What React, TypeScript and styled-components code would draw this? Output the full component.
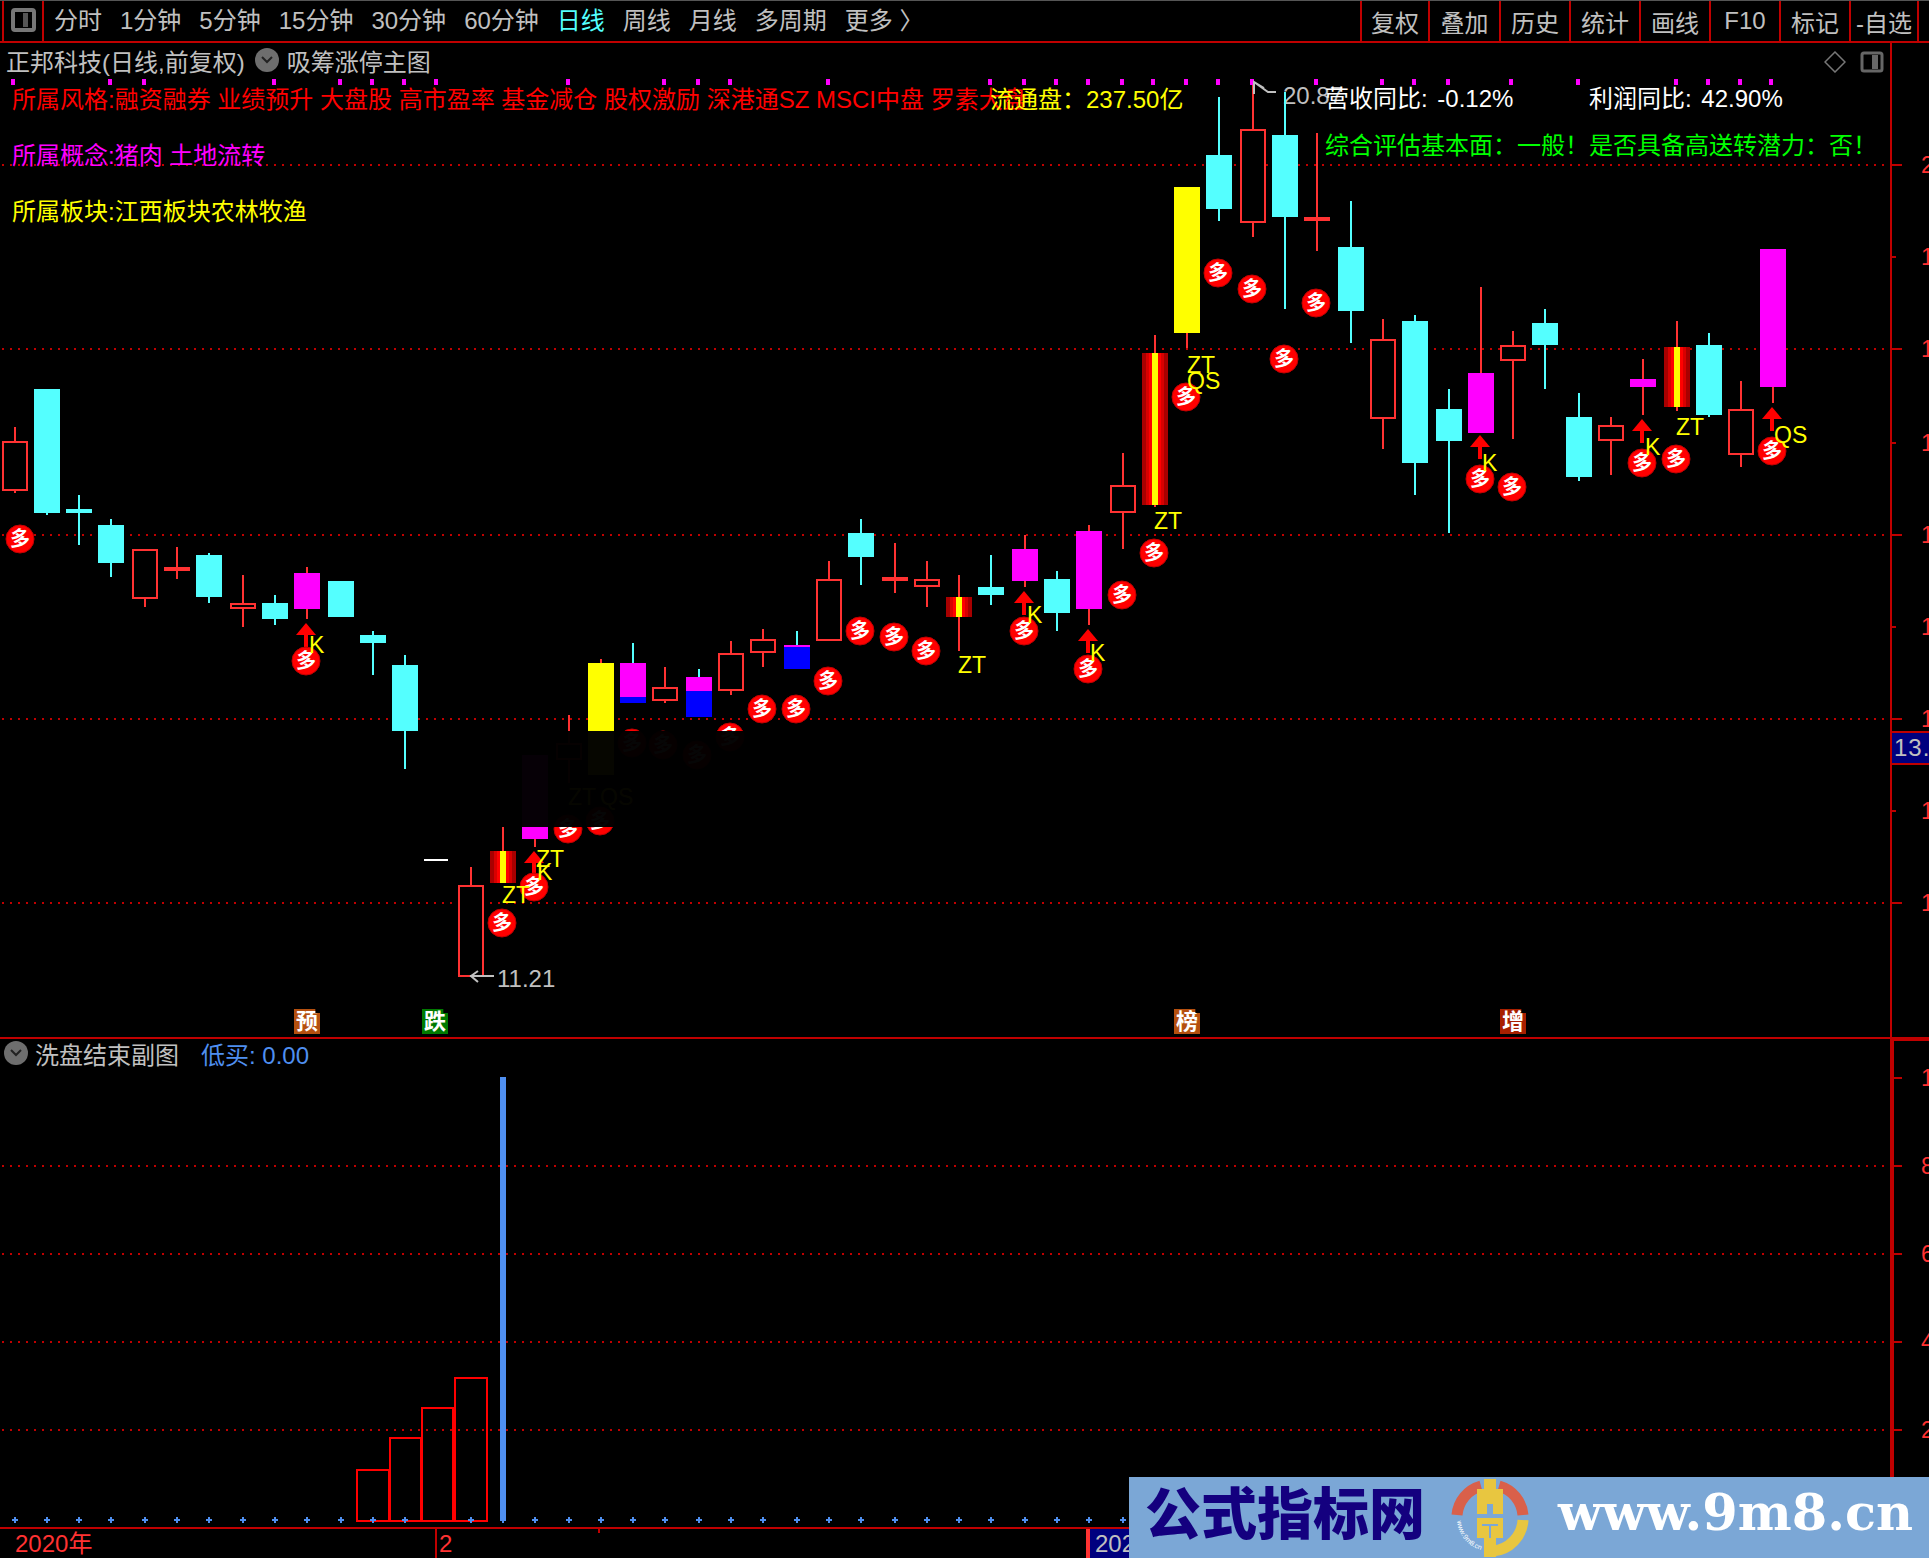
import React from "react";
import styled, { createGlobalStyle } from "styled-components";

const FONT = `"Liberation Sans", "Noto Sans CJK SC", sans-serif`;
const DARK_RED = "#c00000";
const AXIS_RED = "#ff3232";
const GRAY = "#c0c0c0";
const CYAN = "#54ffff";
const BLUE_LINE = "#4f8ff0";

const Global = createGlobalStyle`
  html, body { margin: 0; padding: 0; background: #000; }
  body { font-family: ${FONT}; }
`;

const Page = styled.div`
  position: relative;
  width: 1929px;
  height: 1558px;
  overflow: hidden;
  background: #000;
  display: flex;
  flex-direction: column;
  font-family: ${FONT};
  color: ${GRAY};
`;

const Toolbar = styled.header`
  height: 40px;
  flex: none;
  display: flex;
  align-items: center;
  border-top: 1px solid #555;
  border-bottom: 2px solid ${DARK_RED};
  padding-left: 2px;
`;

const LayoutCell = styled.div`
  width: 42px;
  height: 40px;
  flex: none;
  display: flex;
  align-items: center;
  justify-content: center;
  border-left: 2px solid ${DARK_RED};
  border-right: 2px solid ${DARK_RED};
  padding-bottom: 2px;
  box-sizing: border-box;
`;

const PeriodRow = styled.nav`
  display: flex;
  gap: 18px;
  margin-left: 10px;
  font-size: 24px;
  line-height: 42px;
  white-space: nowrap;
`;

const PeriodItem = styled.span<{ $active?: boolean }>`
  color: ${(p) => (p.$active ? CYAN : GRAY)};
`;

const ToolRow = styled.div`
  margin-left: auto;
  margin-right: 10px;
  display: flex;
  height: 40px;
`;

const ToolCell = styled.div<{ $w: number }>`
  width: ${(p) => p.$w}px;
  box-sizing: border-box;
  display: flex;
  align-items: center;
  justify-content: center;
  border-left: 2px solid ${DARK_RED};
  font-size: 24px;
  white-space: nowrap;
  &:last-child { border-right: 2px solid ${DARK_RED}; }
`;

const ChartPanel = styled.section<{ $h: number }>`
  position: relative;
  flex: none;
  height: ${(p) => p.$h}px;
  border-bottom: 2px solid ${DARK_RED};
`;

const Canvas = styled.svg`
  position: absolute;
  inset: 0;
  display: block;
`;

const PanelHeader = styled.div`
  position: relative;
  display: flex;
  align-items: center;
  height: 26px;
  font-size: 24px;
  white-space: nowrap;
`;

const MainHeader = styled(PanelHeader)`
  padding: 4px 0 0 6px;
`;

const SubHeader = styled(PanelHeader)`
  padding: 1px 0 0 4px;
`;

const Chevron = styled.span<{ $m: string }>`
  width: 24px;
  height: 24px;
  margin: ${(p) => p.$m};
  flex: none;
  border-radius: 50%;
  background: #6e6e6e;
  display: flex;
  align-items: center;
  justify-content: center;
`;

const SubValue = styled.span`
  color: ${BLUE_LINE};
  margin-left: 22px;
`;

const Corner = styled.div`
  position: absolute;
  top: 8px;
  left: 1824px;
  display: flex;
  gap: 14px;
`;

const Legend = styled.div`
  position: absolute;
  left: 12px;
  top: 45px;
  display: flex;
  flex-direction: column;
  gap: 32px;
  font-size: 24px;
  line-height: 24px;
  white-space: pre;
`;

const Line = styled.div<{ $c: string }>`
  color: ${(p) => p.$c};
`;

const Overprint = styled.div<{ $x: number; $y: number; $c: string }>`
  position: absolute;
  left: ${(p) => p.$x}px;
  top: ${(p) => p.$y}px;
  color: ${(p) => p.$c};
  font-size: 24px;
  line-height: 24px;
  white-space: pre;
  word-spacing: 3px;
`;

const Dimmer = styled.div`
  position: absolute;
  left: 420px;
  top: 688px;
  width: 760px;
  height: 96px;
  background: rgba(0, 0, 0, 0.975);
`;

const PriceTag = styled.div`
  position: absolute;
  left: 1892px;
  top: 688px;
  width: 37px;
  height: 34px;
  box-sizing: border-box;
  background: #00007f;
  border-top: 2px solid ${DARK_RED};
  border-bottom: 2px solid ${DARK_RED};
  padding-left: 2px;
  font-size: 24px;
  letter-spacing: 1px;
  line-height: 30px;
  color: ${GRAY};
  white-space: nowrap;
  overflow: hidden;
`;

const Label = styled.text<{ $c?: string }>`
  font-family: ${FONT};
  font-size: 23px;
  fill: ${(p) => p.$c ?? "#ffff00"};
`;

const PriceNote = styled(Label)`
  font-size: 24px;
`;

const BadgeGlyph = styled.text`
  font-family: "Noto Sans CJK SC", sans-serif;
  font-size: 20px;
  font-weight: 700;
  fill: #fff;
  text-anchor: middle;
`;

const Signal = styled.div<{ $x: number; $bg: string }>`
  position: absolute;
  left: ${(p) => p.$x}px;
  top: 966px;
  width: 26px;
  height: 25px;
  background: ${(p) => p.$bg};
  clip-path: polygon(0 0, 82% 0, 82% 16%, 100% 16%, 100% 100%, 0 100%);
  color: #fff;
  font-size: 22px;
  font-weight: 700;
  line-height: 25px;
  text-align: center;
`;

const DateBar = styled.footer`
  flex: 1;
  display: flex;
  font-size: 24px;
  color: ${AXIS_RED};
  line-height: 29px;
`;

const YearCell = styled.div`
  width: 435px;
  box-sizing: border-box;
  padding-left: 15px;
`;

const MonthCell = styled.div`
  position: relative;
  width: 651px;
  box-sizing: border-box;
  border-left: 2px solid ${DARK_RED};
  padding-left: 2px;
  &::after {
    content: "";
    position: absolute;
    left: 161px;
    top: 0;
    width: 2px;
    height: 4px;
    background: ${DARK_RED};
  }
`;

const CursorTag = styled.div`
  width: 200px;
  box-sizing: border-box;
  padding-left: 5px;
  background: #00007f;
  border-left: 4px solid ${AXIS_RED};
  color: ${GRAY};
  white-space: nowrap;
`;

const Watermark = styled.aside`
  position: absolute;
  left: 1129px;
  top: 1477px;
  right: 0;
  bottom: 0;
  background: #7ba7d6;
  display: flex;
  align-items: center;
  padding-left: 16px;
`;

const BrandCn = styled.div`
  width: 306px;
  font-family: "Noto Sans CJK SC", sans-serif;
  font-size: 56px;
  line-height: 80px;
  font-weight: 900;
  color: #14007f;
  white-space: nowrap;
  margin-top: -16px;
`;

const BrandUrl = styled.div`
  margin-left: 29px;
  font-family: "DejaVu Serif", serif;
  font-weight: 700;
  font-size: 51px;
  line-height: 60px;
  color: #fff;
  white-space: nowrap;
  margin-top: -12px;
`;

const LogoText = styled.text`
  font-family: "Liberation Sans", sans-serif;
  font-size: 7px;
  fill: #fff;
`;

type Kind = "hollow" | "solid" | "cyan" | "magenta" | "yellow" | "limit" | "blue";
type Candle = [number, number, number, number, number, Kind, number?];

const CANDLES: Candle[] = [
  [15, 427, 493, 441, 491, "hollow"],
  [47, 389, 515, 389, 513, "cyan"],
  [79, 495, 545, 509, 513, "cyan"],
  [111, 519, 577, 525, 563, "cyan"],
  [145, 549, 607, 549, 599, "hollow"],
  [177, 547, 579, 567, 571, "solid"],
  [209, 553, 603, 555, 597, "cyan"],
  [243, 575, 627, 603, 609, "hollow"],
  [275, 595, 625, 603, 619, "cyan"],
  [307, 567, 619, 573, 609, "magenta"],
  [341, 581, 617, 581, 617, "cyan"],
  [373, 631, 675, 635, 643, "cyan"],
  [405, 655, 769, 665, 731, "cyan"],
  [471, 867, 977, 885, 977, "hollow"],
  [503, 827, 883, 851, 883, "limit"],
  [535, 755, 847, 755, 839, "magenta"],
  [569, 715, 783, 743, 760, "hollow"],
  [601, 659, 775, 663, 775, "yellow"],
  [633, 643, 703, 663, 703, "blue", 697],
  [665, 667, 703, 687, 701, "hollow"],
  [699, 669, 717, 677, 717, "blue", 691],
  [731, 641, 695, 653, 691, "hollow"],
  [763, 629, 667, 639, 653, "hollow"],
  [797, 631, 669, 645, 669, "blue", 647],
  [829, 561, 641, 579, 641, "hollow"],
  [861, 519, 585, 533, 557, "cyan"],
  [895, 543, 593, 577, 581, "solid"],
  [927, 561, 607, 579, 587, "hollow"],
  [959, 575, 651, 597, 617, "limit"],
  [991, 555, 605, 587, 595, "cyan"],
  [1025, 535, 587, 549, 581, "magenta"],
  [1057, 571, 631, 579, 613, "cyan"],
  [1089, 525, 625, 531, 609, "magenta"],
  [1123, 453, 549, 485, 513, "hollow"],
  [1155, 335, 507, 353, 505, "limit"],
  [1187, 187, 348, 187, 333, "yellow"],
  [1219, 97, 221, 155, 209, "cyan"],
  [1253, 85, 237, 129, 223, "hollow"],
  [1285, 92, 309, 135, 217, "cyan"],
  [1317, 133, 251, 217, 221, "solid"],
  [1351, 201, 343, 247, 311, "cyan"],
  [1383, 319, 449, 339, 419, "hollow"],
  [1415, 315, 495, 321, 463, "cyan"],
  [1449, 389, 533, 409, 441, "cyan"],
  [1481, 287, 373, 373, 433, "magenta"],
  [1513, 331, 439, 345, 361, "hollow"],
  [1545, 309, 389, 323, 345, "cyan"],
  [1579, 393, 481, 417, 477, "cyan"],
  [1611, 417, 475, 425, 441, "hollow"],
  [1643, 359, 415, 379, 387, "magenta"],
  [1677, 321, 411, 347, 407, "limit"],
  [1709, 333, 417, 345, 415, "cyan"],
  [1741, 381, 467, 409, 455, "hollow"],
  [1773, 249, 403, 249, 387, "magenta"],
];

const BADGES: [number, number][] = [
  [20, 539], [306, 661], [502, 923], [534, 887], [568, 829], [600, 821],
  [730, 737], [632, 743], [663, 745], [697, 755], [762, 709], [796, 709],
  [828, 681], [860, 631], [894, 637], [926, 651], [1024, 631], [1088, 669],
  [1122, 595], [1154, 553], [1186, 397], [1218, 273], [1252, 289], [1316, 303],
  [1284, 359], [1480, 479], [1512, 487], [1642, 463], [1676, 459], [1772, 451],
];

const ARROWS: [number, number][] = [
  [306, 623], [534, 851], [1024, 591], [1088, 629], [1480, 435], [1642, 419], [1772, 407],
];

const TAGS: [string, number, number][] = [
  ["K", 309, 653], ["K", 537, 880], ["K", 1027, 623], ["K", 1090, 661],
  ["K", 1482, 471], ["K", 1645, 455],
  ["ZT", 536, 867], ["ZT", 502, 903], ["ZT", 958, 673], ["ZT", 1154, 529],
  ["ZT", 1187, 373], ["ZT", 1676, 435], ["ZT", 568, 805],
  ["QS", 1187, 389], ["QS", 1774, 443], ["QS", 600, 805],
];

const PINK_MARKS = [
  13, 110, 144, 274, 340, 372, 404, 436, 568, 664, 698, 730, 828, 990, 1024, 1056,
  1088, 1122, 1153, 1186, 1218, 1252, 1316, 1382, 1414, 1448, 1511, 1578, 1676,
  1708, 1740, 1771,
];

const MAIN_MAJOR = [164, 348, 534, 718, 902];
const MAIN_MINOR = [256, 442, 626, 810];
const SUB_GRID = [1166, 1254, 1342, 1430];
const SUB_LABELS: [string, number][] = [["1", 1078], ["8", 1166], ["6", 1254], ["4", 1342], ["2", 1430]];
const VOL_BARS: [number, number, number][] = [
  [357, 32, 1470], [390, 31, 1438], [422, 31, 1408], [455, 32, 1378],
];

const CandleMark = ({ c }: { c: Candle }) => {
  const [x, hi, lo, top, bot, kind, split] = c;
  const left = x - 13;
  const h = bot - top;
  const wick = kind === "cyan" || kind === "blue" ? CYAN : AXIS_RED;
  return (
    <g shapeRendering="crispEdges">
      <rect x={x - 1} y={hi} width={2} height={lo - hi} fill={wick} />
      {kind === "hollow" && (
        <rect x={left + 1} y={top + 1} width={24} height={h - 2} fill="#000" stroke={AXIS_RED} strokeWidth={2} />
      )}
      {kind === "solid" && <rect x={left} y={top} width={26} height={h} fill={AXIS_RED} />}
      {kind === "cyan" && <rect x={left} y={top} width={26} height={h} fill={CYAN} />}
      {kind === "magenta" && <rect x={left} y={top} width={26} height={h} fill="#ff00ff" />}
      {kind === "yellow" && <rect x={left} y={top} width={26} height={h} fill="#ffff00" />}
      {kind === "blue" && (
        <>
          <rect x={left} y={top} width={26} height={h} fill="#0000ff" />
          <rect x={left} y={top} width={26} height={(split ?? top) - top} fill="#ff00ff" />
        </>
      )}
      {kind === "limit" && (
        <>
          <rect x={left} y={top} width={26} height={h} fill="#a80000" />
          <rect x={left + 4} y={top} width={18} height={h} fill="#d80000" />
          <rect x={left + 7} y={top} width={12} height={h} fill="#ff0000" />
          <rect x={left + 10} y={top} width={6} height={h} fill="#ffff00" />
        </>
      )}
    </g>
  );
};

const Badge = ({ x, y }: { x: number; y: number }) => (
  <g>
    <circle cx={x} cy={y} r={14} fill="#ff0000" stroke="#c00000" strokeWidth={1} />
    <BadgeGlyph x={x} y={y + 7}>多</BadgeGlyph>
  </g>
);

const UpArrow = ({ x, y }: { x: number; y: number }) => (
  <g fill="#ff0000" shapeRendering="crispEdges">
    <polygon points={`${x},${y} ${x + 10},${y + 12} ${x - 10},${y + 12}`} shapeRendering="auto" />
    <rect x={x - 2} y={y + 12} width={4} height={12} />
  </g>
);

const ChevronIcon = () => (
  <svg width="12" height="8" viewBox="0 0 12 8" fill="none" stroke="#222" strokeWidth="2">
    <path d="M1 1 L6 6 L11 1" />
  </svg>
);

const Logo = () => (
  <svg width="78" height="78" viewBox="-39 -39 78 78" style={{ flex: "none" }}>
    <defs>
      <path id="logo-arc" d="M-33 3 A33 33 0 0 0 -3 33" />
    </defs>
    <path d="M-33 -3 A33 33 0 0 1 -9 -32" fill="none" stroke="#d9604a" strokeWidth="11" />
    <path d="M9 -32 A33 33 0 0 1 33 -3" fill="none" stroke="#d9604a" strokeWidth="11" />
    <path d="M33 2 A33 33 0 0 1 3 33" fill="none" stroke="#e8c640" strokeWidth="11" />
    <path
      d="M-6 -39 H6 V-29 H13 V-4 H3 V-14 H-3 V-4 H-13 V-29 H-6 Z M-13 0 H13 V20 H6 V39 H-6 V20 H-13 Z"
      fill="#e8c640"
    />
    <rect x="-8" y="6" width="16" height="2" fill="#7ba7d6" />
    <rect x="-1" y="8" width="2" height="12" fill="#7ba7d6" />
    <LogoText>
      <textPath href="#logo-arc">www.9m8.cn</textPath>
    </LogoText>
  </svg>
);

const MainChart = () => (
  <Canvas width={1929} height={994} viewBox="0 43 1929 994">
    {MAIN_MAJOR.map((y) => (
      <line key={y} x1={2} x2={1886} y1={y + 1} y2={y + 1} stroke={DARK_RED} strokeWidth={2} strokeDasharray="2 6" shapeRendering="crispEdges" />
    ))}
    <g shapeRendering="crispEdges" fill={DARK_RED}>
      <rect x={1890} y={43} width={2} height={994} />
      {MAIN_MAJOR.map((y) => <rect key={y} x={1892} y={y} width={10} height={2} />)}
      {MAIN_MINOR.map((y) => <rect key={y} x={1892} y={y} width={4} height={2} />)}
      {PINK_MARKS.map((x) => <rect key={x} x={x - 2} y={79} width={4} height={6} fill="#ff00ff" />)}
    </g>
    {MAIN_MAJOR.concat(MAIN_MINOR).map((y) => (
      <Label key={y} x={1921} y={y + 9} $c={AXIS_RED}>{y === 164 ? "2" : "1"}</Label>
    ))}
    <rect x={424} y={859} width={24} height={2} fill="#fff" shapeRendering="crispEdges" />
    <PriceNote x={1283} y={104} $c={GRAY}>20.87</PriceNote>
    <PriceNote x={497} y={987} $c={GRAY}>11.21</PriceNote>
    {CANDLES.map((c) => <CandleMark key={c[0]} c={c} />)}
    <g stroke={GRAY} strokeWidth={2} fill="none">
      <path d="M1254 94 V82 L1264 88 M1254 82 L1268 92 H1276" />
      <path d="M470 976 H494 M478 971 L471 976 L478 982" />
    </g>
    {ARROWS.map(([x, y]) => <UpArrow key={x} x={x} y={y} />)}
    {BADGES.map(([x, y]) => <Badge key={`${x}-${y}`} x={x} y={y} />)}
    {TAGS.map(([t, x, y]) => <Label key={`${t}${x}`} x={x} y={y}>{t}</Label>)}
  </Canvas>
);

const SubChart = () => (
  <Canvas width={1929} height={489} viewBox="0 1039 1929 489">
    {SUB_GRID.map((y) => (
      <line key={y} x1={2} x2={1886} y1={y} y2={y} stroke={DARK_RED} strokeWidth={2} strokeDasharray="2 6" shapeRendering="crispEdges" />
    ))}
    <g shapeRendering="crispEdges">
      <rect x={1890} y={1039} width={39} height={2} fill={DARK_RED} />
      <rect x={1890} y={1039} width={4} height={489} fill={DARK_RED} />
      {[1078, ...SUB_GRID].map((y) => <rect key={y} x={1894} y={y - 1} width={8} height={2} fill={DARK_RED} />)}
      {VOL_BARS.map(([x, w, y]) => (
        <rect key={x} x={x} y={y} width={w} height={1521 - y} fill="none" stroke="#ff0000" strokeWidth={2} />
      ))}
      {CANDLES.map(([x]) => (
        <g key={x} fill={BLUE_LINE}>
          <rect x={x - 3} y={1519} width={6} height={2} />
          <rect x={x - 1} y={1517} width={2} height={6} />
        </g>
      ))}
      <rect x={500} y={1077} width={6} height={444} fill={BLUE_LINE} />
    </g>
    {SUB_LABELS.map(([t, y]) => (
      <Label key={t} x={1921} y={y + 8} $c={AXIS_RED}>{t}</Label>
    ))}
  </Canvas>
);

const PERIODS = ["分时", "1分钟", "5分钟", "15分钟", "30分钟", "60分钟", "日线", "周线", "月线", "多周期", "更多 〉"];
const TOOLS: [string, number][] = [
  ["复权", 68], ["叠加", 71], ["历史", 70], ["统计", 70], ["画线", 70], ["F10", 70], ["标记", 70], ["-自选", 70],
];

export default function App() {
  return (
    <Page>
      <Global />
      <Toolbar>
        <LayoutCell>
          <svg width="25" height="24" viewBox="0 0 25 24" fill="none">
            <rect x="2" y="2" width="21" height="20" rx="2" stroke="#777" strokeWidth="4" />
            <rect x="12" y="5" width="5" height="14" fill="#555" />
          </svg>
        </LayoutCell>
        <PeriodRow>
          {PERIODS.map((p) => (
            <PeriodItem key={p} $active={p === "日线"}>{p}</PeriodItem>
          ))}
        </PeriodRow>
        <ToolRow>
          {TOOLS.map(([t, w]) => (
            <ToolCell key={t} $w={w}>{t}</ToolCell>
          ))}
        </ToolRow>
      </Toolbar>

      <ChartPanel $h={994}>
        <MainChart />
        <Dimmer />
        <MainHeader>
          <span>正邦科技(日线,前复权)</span>
          <Chevron $m="0 8px 0 10px"><ChevronIcon /></Chevron>
          <span>吸筹涨停主图</span>
        </MainHeader>
        <Corner>
          <svg width="22" height="22" viewBox="0 0 22 22" fill="none" stroke="#777" strokeWidth="1.5">
            <path d="M11 1 L21 11 L11 21 L1 11 Z" />
          </svg>
          <svg width="24" height="22" viewBox="0 0 24 22" fill="none">
            <rect x="2" y="2" width="20" height="18" rx="2" stroke="#666" strokeWidth="3" />
            <rect x="12" y="4" width="6" height="14" fill="#666" />
          </svg>
        </Corner>
        <Legend>
          <Line $c="#ff0000">所属风格:融资融券 业绩预升 大盘股 高市盈率 基金减仓 股权激励 深港通SZ MSCI中盘 罗素大盘</Line>
          <Line $c="#ff00ff">所属概念:猪肉 土地流转</Line>
          <Line $c="#ffff00">所属板块:江西板块农林牧渔</Line>
        </Legend>
        <Overprint $x={990} $y={45} $c="#ffff00">流通盘：237.50亿</Overprint>
        <Overprint $x={1325} $y={44} $c="#ffffff">营收同比: -0.12%</Overprint>
        <Overprint $x={1589} $y={44} $c="#ffffff">利润同比: 42.90%</Overprint>
        <Overprint $x={1325} $y={91} $c="#00ff00">综合评估基本面：一般！是否具备高送转潜力：否！</Overprint>
        <PriceTag>13.55</PriceTag>
        <Signal $x={294} $bg="#b5500f">预</Signal>
        <Signal $x={422} $bg="#007a00">跌</Signal>
        <Signal $x={1174} $bg="#b5500f">榜</Signal>
        <Signal $x={1500} $bg="#a82000">增</Signal>
      </ChartPanel>

      <ChartPanel $h={488}>
        <SubChart />
        <SubHeader>
          <Chevron $m="0 7px 0 0"><ChevronIcon /></Chevron>
          <span>洗盘结束副图</span>
          <SubValue>低买: 0.00</SubValue>
        </SubHeader>
      </ChartPanel>

      <DateBar>
        <YearCell>2020年</YearCell>
        <MonthCell>2</MonthCell>
        <CursorTag>2020/03/02/一</CursorTag>
      </DateBar>

      <Watermark>
        <BrandCn>公式指标网</BrandCn>
        <Logo />
        <BrandUrl>www.9m8.cn</BrandUrl>
      </Watermark>
    </Page>
  );
}
